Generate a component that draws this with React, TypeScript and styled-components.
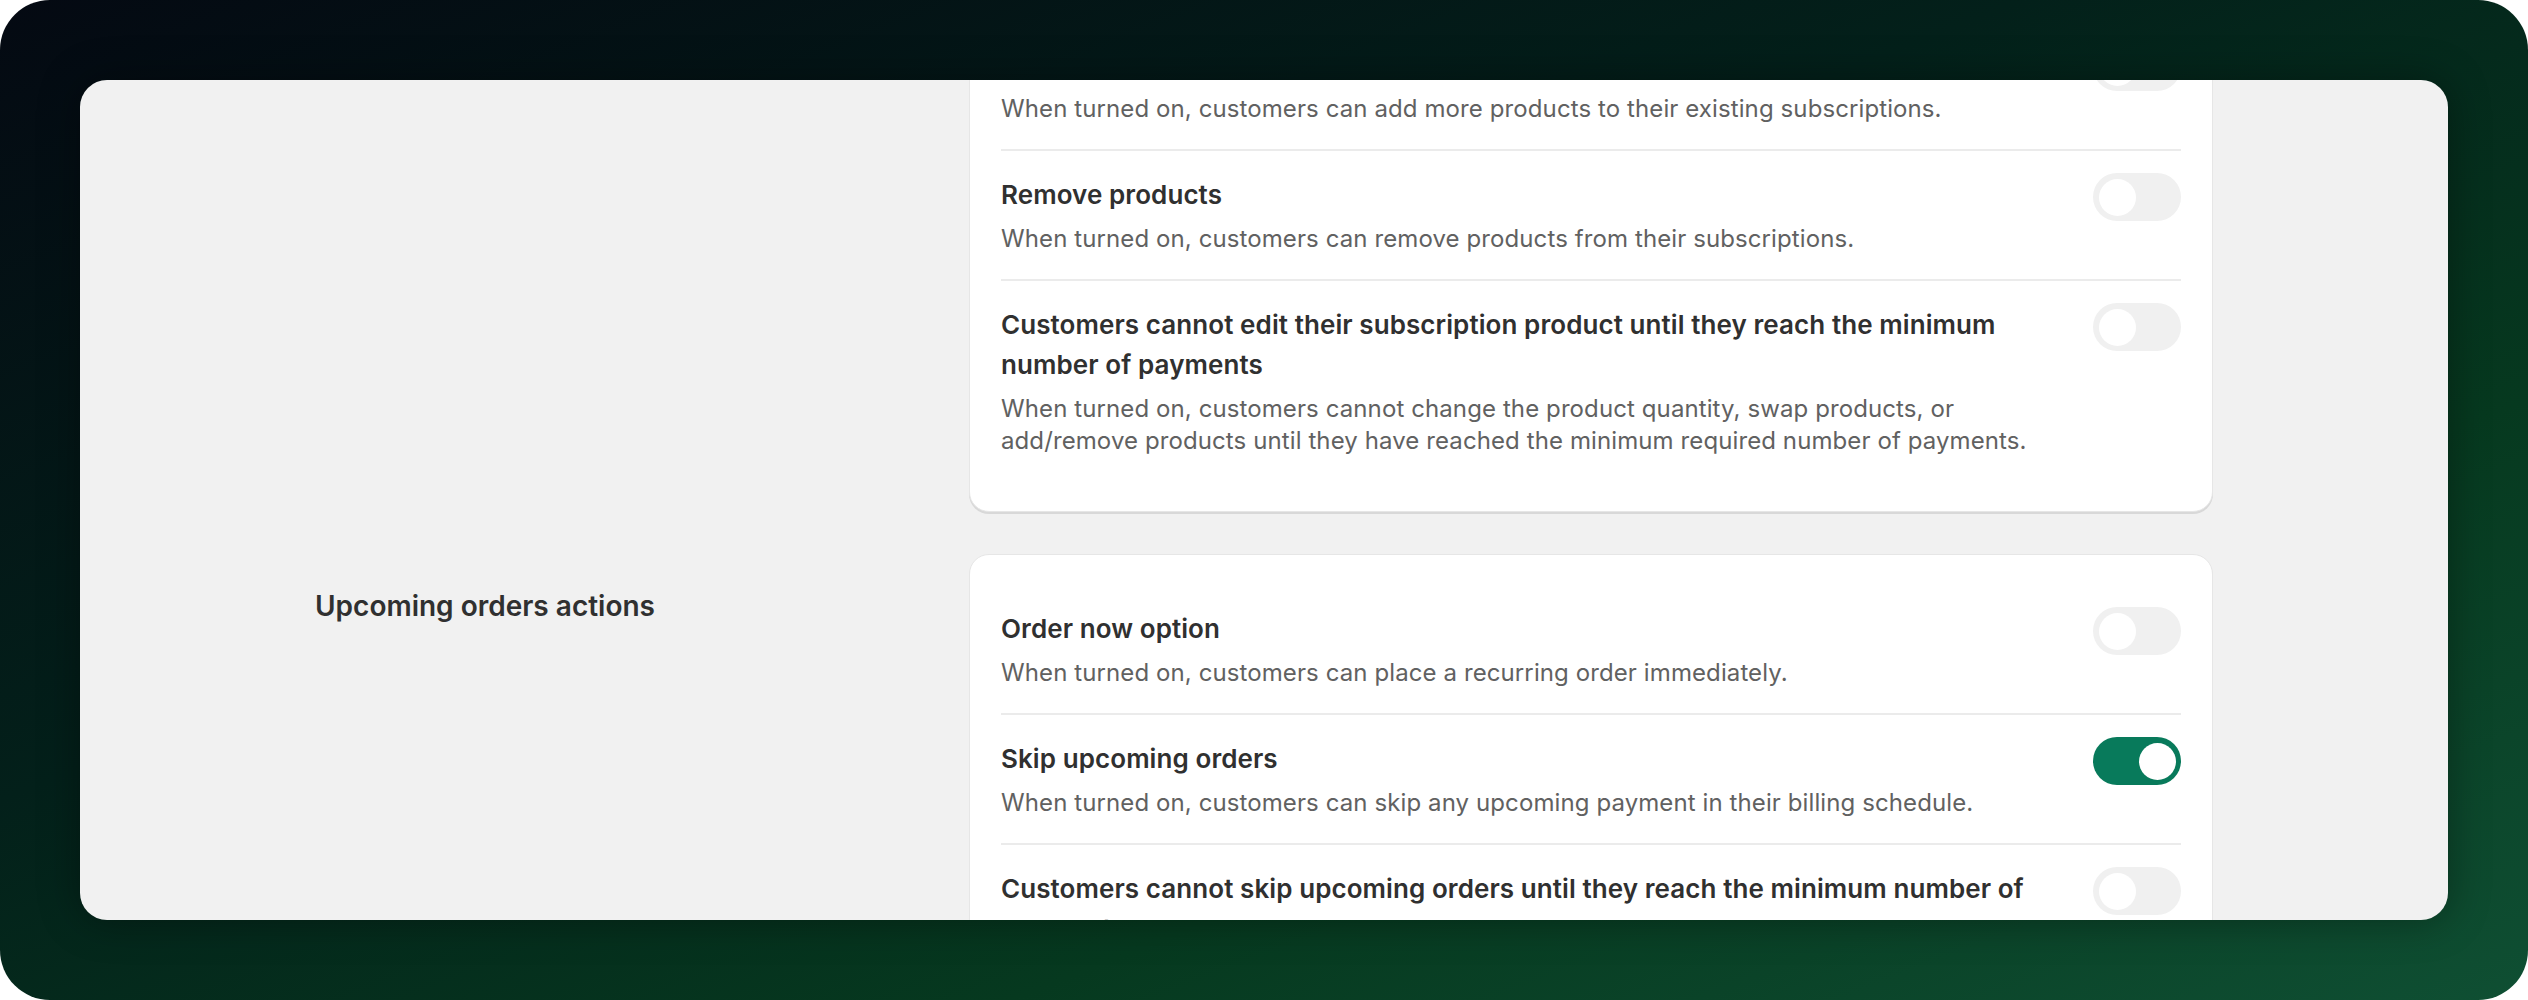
import styled, { createGlobalStyle } from 'styled-components';

const GlobalStyle = createGlobalStyle`
  html, body {
    margin: 0;
    padding: 0;
    background: #ffffff;
  }
  body {
    font-family: Inter, "Noto Sans", sans-serif;
    -webkit-font-smoothing: antialiased;
  }
`;

const Frame = styled.div`
  width: 2528px;
  height: 1000px;
  box-sizing: border-box;
  padding: 80px;
  border-radius: 50px;
  background: linear-gradient(to bottom right, #040912 0%, #03201a 40%, #06391f 70%, #0f4f33 100%);
`;

const Panel = styled.div`
  height: 100%;
  border-radius: 27px;
  background: #f1f1f1;
  overflow: hidden;
  box-shadow: 0 0 40px rgba(0, 0, 0, 0.35);
`;

// content is scrolled: the first card starts above the visible area
const Page = styled.div`
  margin-top: -90px;
  padding: 0 235px;
  display: flex;
  flex-direction: column;
  gap: 42px;
`;

const Section = styled.section`
  display: grid;
  grid-template-columns: 614px 1244px;
  column-gap: 40px;
  align-items: start;
`;

const Annotation = styled.h2`
  margin: 0;
  padding-top: 32px;
  font-size: 28px;
  line-height: 40px;
  font-weight: 600;
  color: #303030;
`;

const Card = styled.div`
  background: #ffffff;
  border: 1px solid #e6e6e6;
  border-radius: 20px;
  box-shadow: 0 2px 0 #d8d8d8;
  padding: 30px 31px;
  display: flex;
  flex-direction: column;
`;

const Row = styled.div`
  display: flex;
  align-items: flex-start;
  gap: 48px;
  padding: 24px 0;

  & + & {
    border-top: 2px solid #ebebeb;
  }
`;

const Texts = styled.div`
  flex: 1;
  display: flex;
  flex-direction: column;
  gap: 8px;
`;

const Title = styled.div`
  font-size: 26px;
  line-height: 40px;
  font-weight: 600;
  letter-spacing: 0.08px;
  color: #303030;
`;

const Description = styled.div`
  font-size: 24px;
  line-height: 32px;
  font-weight: 400;
  letter-spacing: 0.1px;
  color: #616161;
`;

const Switch = styled.span<{ $on?: boolean }>`
  flex: none;
  position: relative;
  margin-top: -2px;
  width: 88px;
  height: 48px;
  border-radius: 24px;
  background: ${(p) => (p.$on ? '#087a5b' : '#f0f0f0')};

  &::after {
    content: '';
    position: absolute;
    top: 5.5px;
    left: ${(p) => (p.$on ? '46px' : '6px')};
    width: 37px;
    height: 37px;
    border-radius: 50%;
    background: #ffffff;
  }
`;

type Setting = { title: string; description: string; on?: boolean };

const sections: { label: string; settings: Setting[] }[] = [
  {
    label: 'Product actions',
    settings: [
      {
        title: 'Add products',
        description: 'When turned on, customers can add more products to their existing subscriptions.',
      },
      {
        title: 'Remove products',
        description: 'When turned on, customers can remove products from their subscriptions.',
      },
      {
        title: 'Customers cannot edit their subscription product until they reach the minimum number of payments',
        description:
          'When turned on, customers cannot change the product quantity, swap products, or add/remove products until they have reached the minimum required number of payments.',
      },
    ],
  },
  {
    label: 'Upcoming orders actions',
    settings: [
      {
        title: 'Order now option',
        description: 'When turned on, customers can place a recurring order immediately.',
      },
      {
        title: 'Skip upcoming orders',
        description: 'When turned on, customers can skip any upcoming payment in their billing schedule.',
        on: true,
      },
      {
        title: 'Customers cannot skip upcoming orders until they reach the minimum number of payments',
        description:
          'When turned on, customers cannot skip upcoming orders until they have reached the minimum required number of payments.',
      },
    ],
  },
];

const App = () => {
  return (
    <>
      <GlobalStyle />
      <Frame>
        <Panel>
          <Page>
            {sections.map((section) => (
              <Section key={section.label}>
                <Annotation>{section.label}</Annotation>
                <Card>
                  {section.settings.map((s) => (
                    <Row key={s.title}>
                      <Texts>
                        <Title>{s.title}</Title>
                        <Description>{s.description}</Description>
                      </Texts>
                      <Switch role="switch" aria-checked={!!s.on} $on={s.on} />
                    </Row>
                  ))}
                </Card>
              </Section>
            ))}
          </Page>
        </Panel>
      </Frame>
    </>
  );
};

export default App;
